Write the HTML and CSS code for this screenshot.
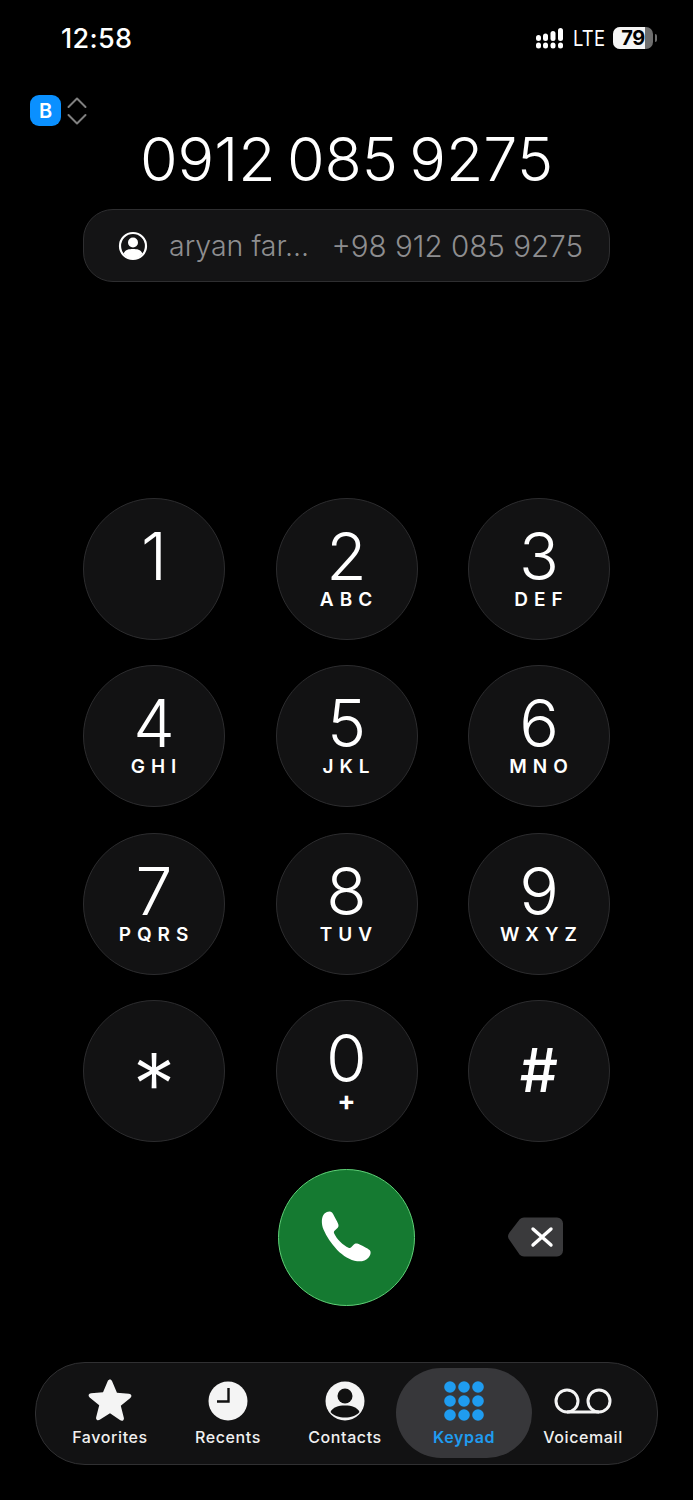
FILE: index.html
```html
<!DOCTYPE html>
<html lang="en">
<head>
<meta charset="utf-8">
<title>Keypad</title>
<link rel="stylesheet" href="styles.css">
</head>
<body>
<div class="screen">
  <header class="status">
    <span class="time">12:58</span>
    <div class="status-right">
      <svg class="signal" width="30" height="22" viewBox="0 0 30 22"><g fill="#fff"><rect x="1" y="8" width="5" height="6" rx="2.5"/><rect x="1" y="15.500" width="5" height="6" rx="2.500"/><rect x="8" y="6.500" width="5" height="7.500" rx="2.500"/><rect x="8" y="15.500" width="5" height="6" rx="2.500"/><rect x="15.500" y="4" width="5" height="10" rx="2.500"/><rect x="15.500" y="15.500" width="5" height="6" rx="2.500"/><rect x="23" y="1" width="5" height="13" rx="2.500"/><rect x="23" y="15.500" width="5" height="6" rx="2.500"/></g></svg>
      <span class="lte">LTE</span>
      <div class="battery"><div class="battery-fill" style="width:79%"></div><span class="battery-num">79</span></div>
      <span class="battery-cap"></span>
    </div>
  </header>

  <div class="sim">
    <span class="sim-badge">B</span>
    <svg class="sim-arrows" width="22" height="30" viewBox="0 0 22 30"><path d="M2.500 11 11 2.500 19.500 11M2.500 19 11 27.500 19.500 19" fill="none" stroke="#808080" stroke-width="2" stroke-linecap="round" stroke-linejoin="round"/></svg>
  </div>

  <div class="number">0912 085 9275</div>

  <div class="suggest">
    <svg class="suggest-icon" width="30" height="30" viewBox="0 0 30 30"><circle cx="15" cy="15" r="13" fill="none" stroke="#fff" stroke-width="2.200"/><circle cx="15" cy="11.500" r="5" fill="#fff"/><path d="M5.500 22.500C7.500 18.500 11 18 15 18s7.500.5 9.500 4.500A13 13 0 0 1 15 28 13 13 0 0 1 5.500 22.500Z" fill="#fff"/></svg>
    <span class="suggest-name">aryan far...</span>
    <span class="suggest-num">+98 912 085 9275</span>
  </div>

  <main class="keypad">
    <div class="key"><span class="digit">1</span></div>
    <div class="key"><span class="digit">2</span><span class="letters">ABC</span></div>
    <div class="key"><span class="digit">3</span><span class="letters">DEF</span></div>
    <div class="key"><span class="digit">4</span><span class="letters">GHI</span></div>
    <div class="key"><span class="digit">5</span><span class="letters">JKL</span></div>
    <div class="key"><span class="digit">6</span><span class="letters">MNO</span></div>
    <div class="key"><span class="digit">7</span><span class="letters">PQRS</span></div>
    <div class="key"><span class="digit">8</span><span class="letters">TUV</span></div>
    <div class="key"><span class="digit">9</span><span class="letters">WXYZ</span></div>
    <div class="key key-sym"><span class="star">*</span></div>
    <div class="key"><span class="digit">0</span><span class="letters plus">+</span></div>
    <div class="key key-sym"><span class="hash">#</span></div>
  </main>

  <div class="actions">
    <div class="call">
      <svg width="56" height="56" viewBox="0 0 56 56"><path d="M5.500 4.500C8 2.200 11.500 1.800 13 3.500c1.300 1.500 5.200 9 6.200 11.500.7 1.800.2 3.200-1 4.300l-2.600 2.400c-.8.700-.9 1.700-.4 2.700 1.300 2.700 3.300 5.600 6 8.300s5.700 4.800 8.300 6c1 .5 2 .4 2.700-.4l2.400-2.600c1.100-1.200 2.700-1.700 4.400-1 2.500 1 10.200 5 11.600 6.200 1.700 1.500 1.200 5-1 7.500-2.700 3-7 4.500-11.500 3.800-7-1.100-14-5.400-19.900-11.300C12.300 34.500 7.400 27.500 4.500 20.500 2.300 15 2 8 5.500 4.500Z" fill="#fff"/></svg>
    </div>
    <div class="delete">
      <svg width="58" height="42" viewBox="0 0 58 42"><path d="M17 1.500H50a6 6 0 0 1 6 6v27a6 6 0 0 1-6 6H17a6 6 0 0 1-4.300-1.800L2.500 24a6 6 0 0 1 0-7.500L12.700 3.300A6 6 0 0 1 17 1.500Z" fill="#3a3a3c"/><path d="M26 13 44 29M44 13 26 29" stroke="#fff" stroke-width="3.400" stroke-linecap="round" fill="none"/></svg>
    </div>
  </div>

  <nav class="tabs">
    <div class="tab tab-fav">
      <svg width="44" height="42" viewBox="0 0 46 44"><path d="M23 .5c1 0 1.700.7 2.100 1.700l5.200 12.300 12.600.9c1.200.1 2.100.7 2.400 1.700.3 1-.1 2-1 2.700l-10 8.200 3.200 12.700c.3 1.100 0 2.100-.8 2.700-.8.500-1.900.5-2.900-.1L23 36l-10.800 6.800c-1 .6-2.100.6-2.900.1-.8-.6-1.100-1.600-.8-2.700L11.700 27.500 1.700 19.300c-.9-.7-1.300-1.700-1-2.700.3-1 1.200-1.600 2.400-1.700l12.600-.9 5.200-12.300C21.300 1.200 22 .5 23 .5Z" fill="#f4f4f4"/></svg>
      <span>Favorites</span>
    </div>
    <div class="tab tab-rec">
      <svg width="40" height="40" viewBox="0 0 40 40"><circle cx="20" cy="20" r="19.500" fill="#f4f4f4"/><path d="M20.500 7V20.500H9" fill="none" stroke="#111" stroke-width="2.400"/></svg>
      <span>Recents</span>
    </div>
    <div class="tab tab-con">
      <svg width="40" height="40" viewBox="0 0 40 40"><circle cx="20" cy="20" r="19.500" fill="#f4f4f4"/><circle cx="20" cy="15" r="7.500" fill="#111"/><path d="M5.500 31C8 26 13 24.500 20 24.500S32 26 34.500 31C31 35 26 36.500 20 36.500S9 35 5.500 31Z" fill="#111"/></svg>
      <span>Contacts</span>
    </div>
    <div class="tab tab-key">
      <svg width="42" height="40" viewBox="0 0 42 40"><g fill="#1f9cf0"><circle cx="7" cy="6" r="5.800"/><circle cx="21" cy="6" r="5.800"/><circle cx="35" cy="6" r="5.800"/><circle cx="7" cy="20" r="5.800"/><circle cx="21" cy="20" r="5.800"/><circle cx="35" cy="20" r="5.800"/><circle cx="7" cy="34" r="5.800"/><circle cx="21" cy="34" r="5.800"/><circle cx="35" cy="34" r="5.800"/></g></svg>
      <span>Keypad</span>
    </div>
    <div class="tab tab-vm">
      <svg width="58" height="40" viewBox="0 0 58 40"><g fill="none" stroke="#f4f4f4" stroke-width="3"><circle cx="13" cy="20" r="11"/><circle cx="45" cy="20" r="11"/><path d="M13 31H45"/></g></svg>
      <span>Voicemail</span>
    </div>
  </nav>
</div>
</body>
</html>
```
FILE: styles.css
```css
* { box-sizing: border-box; }
html, body { margin: 0; padding: 0; background: #000; }
body { font-family: Inter, "Liberation Sans", sans-serif; color: #fff; }
.screen { width: 693px; height: 1500px; overflow: hidden; display: flex; flex-direction: column; }

.status { height: 76px; padding: 0 36px 0 61px; display: flex; justify-content: space-between; align-items: center; }
.time { font-size: 27px; font-weight: 500; letter-spacing: 0.3px; }
.status-right { display: flex; align-items: center; }
.signal { margin-right: 8px; }
.lte { font-size: 21px; font-weight: 400; margin-right: 8px; letter-spacing: 0.2px; transform: scaleX(0.88); transform-origin: left; width: 32px; }
.battery { position: relative; width: 40px; height: 22px; border-radius: 7px; background: #6e6e6e; overflow: hidden; display: flex; align-items: center; justify-content: center; }
.battery-fill { position: absolute; left: 0; top: 0; bottom: 0; background: #f5f5f5; }
.battery-num { position: relative; color: #000; font-size: 20px; font-weight: 700; letter-spacing: -0.5px; }
.battery-cap { width: 2px; height: 8px; margin-left: 2px; background: #6e6e6e; border-radius: 0 2px 2px 0; }

.sim { height: 35px; margin-top: 17px; padding-left: 30px; display: flex; align-items: center; gap: 5px; }
.sim-badge { width: 31px; height: 31px; border-radius: 9px; background: #0a90ff; display: flex; align-items: center; justify-content: center; font-size: 20px; font-weight: 600; }

.number { height: 64px; margin-top: -1px; font-size: 61px; font-weight: 300; line-height: 64px; word-spacing: -6px; text-align: center; white-space: nowrap; }

.suggest { width: 527px; height: 73px; margin: 18px 0 0 83px; padding: 0 26px 0 34px; background: #141415; border: 1px solid #2e2e30; border-radius: 30px; display: flex; align-items: center; font-size: 28.500px; font-weight: 300; color: #8e8e90; white-space: nowrap; }
.suggest-icon { margin-right: 21px; flex: none; }
.suggest-name { flex: 1; }
.suggest-num { font-size: 29.600px; }

.keypad { width: 527px; margin: 216px 0 0 83px; display: grid; grid-template-columns: repeat(3, 142px); grid-auto-rows: 142px; column-gap: 50.500px; row-gap: 25.300px; }
.key { background: #121213; border: 1px solid #2c2c2e; border-radius: 50%; display: flex; flex-direction: column; align-items: center; padding-top: 30px; }
.digit { font-size: 66px; font-weight: 300; line-height: 54px; height: 54px; }
.letters { margin-top: 6px; margin-left: 5px; font-size: 19px; font-weight: 600; line-height: 22px; letter-spacing: 6px; }
.letters.plus { font-size: 27px; font-weight: 700; letter-spacing: 0; margin-left: 0; margin-top: 5px; }
.key-sym { padding-top: 0; justify-content: center; }
.star { font-size: 86px; font-weight: 300; line-height: 60px; height: 60px; padding-top: 14px; }
.hash { font-size: 60px; font-weight: 500; line-height: 60px; height: 60px; margin-top: -1px; }

.actions { width: 527px; margin: 27px 0 0 83px; display: grid; grid-template-columns: 142px 142px 142px; column-gap: 50.500px; align-items: center; }
.call { grid-column: 2; justify-self: center; width: 137px; height: 137px; border-radius: 50%; background: #157a31; border: 1.500px solid #5fd077; display: flex; align-items: center; justify-content: center; }
.delete { display: flex; justify-content: center; margin-left: -6px; margin-top: -1px; }

.tabs { width: 623px; height: 103px; margin: 56px 0 0 35px; background: #121213; border: 1px solid #303032; border-radius: 50px; position: relative; }
.tab { position: absolute; top: 5px; height: 90px; display: flex; flex-direction: column; align-items: center; justify-content: flex-start; font-size: 16px; font-weight: 500; letter-spacing: 0.6px; color: #f0f0f0; }
.tab svg { margin-top: 13px; }
.tab span { position: absolute; top: 59px; white-space: nowrap; }
.tab-fav { left: 34px; width: 80px; }
.tab-fav svg { margin-top: 11px; }
.tab-rec { left: 152px; width: 80px; }
.tab-con { left: 269px; width: 80px; }
.tab-key { left: 360px; width: 136px; background: #37373a; border-radius: 45px; color: #1f9cf0; font-weight: 600; }
.tab-vm { left: 507px; width: 80px; }
```
